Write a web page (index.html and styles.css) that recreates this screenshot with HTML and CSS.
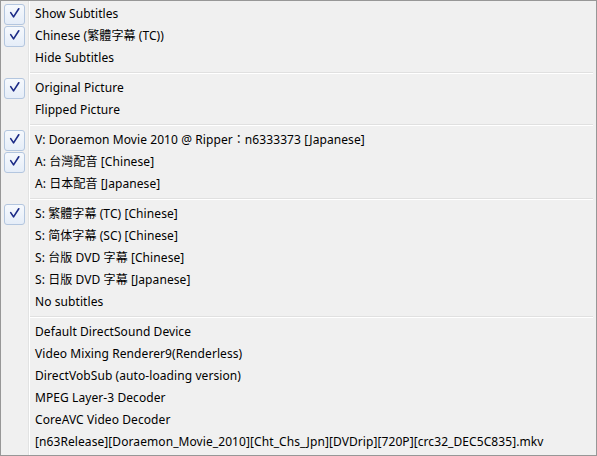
FILE: index.html
```html
<!DOCTYPE html>
<html>
<head>
<meta charset="utf-8">
<link rel="stylesheet" href="styles.css">
</head>
<body>
<div class="menu">
  <div class="item checked"><span class="gut"><span class="box"><svg viewBox="0 0 20 20" width="20" height="20"><path d="M6 8.5 L9 13 L14.5 4.5" fill="none" stroke="#1b2a86" stroke-width="1.7" stroke-linecap="round" stroke-linejoin="round"/></svg></span></span><span class="label">Show Subtitles</span></div>
  <div class="item checked"><span class="gut"><span class="box"><svg viewBox="0 0 20 20" width="20" height="20"><path d="M6 8.5 L9 13 L14.5 4.5" fill="none" stroke="#1b2a86" stroke-width="1.7" stroke-linecap="round" stroke-linejoin="round"/></svg></span></span><span class="label">Chinese (繁體字幕 (TC))</span></div>
  <div class="item"><span class="gut"></span><span class="label">Hide Subtitles</span></div>
  <div class="sep"></div>
  <div class="item checked"><span class="gut"><span class="box"><svg viewBox="0 0 20 20" width="20" height="20"><path d="M6 8.5 L9 13 L14.5 4.5" fill="none" stroke="#1b2a86" stroke-width="1.7" stroke-linecap="round" stroke-linejoin="round"/></svg></span></span><span class="label">Original Picture</span></div>
  <div class="item"><span class="gut"></span><span class="label">Flipped Picture</span></div>
  <div class="sep"></div>
  <div class="item checked"><span class="gut"><span class="box"><svg viewBox="0 0 20 20" width="20" height="20"><path d="M6 8.5 L9 13 L14.5 4.5" fill="none" stroke="#1b2a86" stroke-width="1.7" stroke-linecap="round" stroke-linejoin="round"/></svg></span></span><span class="label">V: Doraemon Movie 2010 @ Ripper：n6333373 [Japanese]</span></div>
  <div class="item checked"><span class="gut"><span class="box"><svg viewBox="0 0 20 20" width="20" height="20"><path d="M6 8.5 L9 13 L14.5 4.5" fill="none" stroke="#1b2a86" stroke-width="1.7" stroke-linecap="round" stroke-linejoin="round"/></svg></span></span><span class="label">A: 台灣配音 [Chinese]</span></div>
  <div class="item"><span class="gut"></span><span class="label">A: 日本配音 [Japanese]</span></div>
  <div class="sep"></div>
  <div class="item checked"><span class="gut"><span class="box"><svg viewBox="0 0 20 20" width="20" height="20"><path d="M6 8.5 L9 13 L14.5 4.5" fill="none" stroke="#1b2a86" stroke-width="1.7" stroke-linecap="round" stroke-linejoin="round"/></svg></span></span><span class="label">S: 繁體字幕 (TC) [Chinese]</span></div>
  <div class="item"><span class="gut"></span><span class="label">S: 简体字幕 (SC) [Chinese]</span></div>
  <div class="item"><span class="gut"></span><span class="label">S: 台版 DVD 字幕 [Chinese]</span></div>
  <div class="item"><span class="gut"></span><span class="label">S: 日版 DVD 字幕 [Japanese]</span></div>
  <div class="item"><span class="gut"></span><span class="label">No subtitles</span></div>
  <div class="sep"></div>
  <div class="item"><span class="gut"></span><span class="label">Default DirectSound Device</span></div>
  <div class="item"><span class="gut"></span><span class="label">Video Mixing Renderer9(Renderless)</span></div>
  <div class="item"><span class="gut"></span><span class="label">DirectVobSub (auto-loading version)</span></div>
  <div class="item"><span class="gut"></span><span class="label">MPEG Layer-3 Decoder</span></div>
  <div class="item"><span class="gut"></span><span class="label">CoreAVC Video Decoder</span></div>
  <div class="item"><span class="gut"></span><span class="label">[n63Release][Doraemon_Movie_2010][Cht_Chs_Jpn][DVDrip][720P][crc32_DEC5C835].mkv</span></div>
</div>
</body>
</html>
```
FILE: styles.css
```css
html, body {
  margin: 0;
  padding: 0;
  background: #f0f0f0;
}
.menu {
  box-sizing: border-box;
  width: 597px;
  height: 456px;
  border: 1px solid #979797;
  padding: 2px;
  background-color: #f0f0f0;
  background-image:
    linear-gradient(#e2e3e3, #e2e3e3),
    linear-gradient(#ffffff, #ffffff);
  background-repeat: no-repeat;
  background-size: 1px 100%, 1px 100%;
  background-position: 27px 0, 28px 0;
  background-origin: padding-box;
  display: flex;
  flex-direction: column;
  font-family: "Noto Sans", "Noto Sans CJK TC", sans-serif;
  font-size: 12px;
  letter-spacing: 0.08px;
  color: #000;
}
.item {
  height: 22px;
  display: flex;
  align-items: center;
}
.gut {
  width: 22px;
  height: 22px;
  display: flex;
  align-items: center;
  justify-content: center;
  flex: none;
}
.box {
  box-sizing: border-box;
  width: 21px;
  height: 21px;
  border: 1px solid #b3c6df;
  border-radius: 3px;
  background: linear-gradient(#f6f9fd, #e5edf8);
  display: flex;
  align-items: center;
  justify-content: center;
}
.box svg {
  display: block;
}
.label {
  padding-left: 10px;
  white-space: nowrap;
  line-height: 22px;
}
.sep {
  height: 8px;
  margin-left: 27px;
  margin-right: 1px;
  background-image:
    linear-gradient(#e0e0e0, #e0e0e0),
    linear-gradient(#ffffff, #ffffff);
  background-repeat: no-repeat;
  background-size: 100% 1px, 100% 1px;
  background-position: 0 3px, 0 4px;
}
```
